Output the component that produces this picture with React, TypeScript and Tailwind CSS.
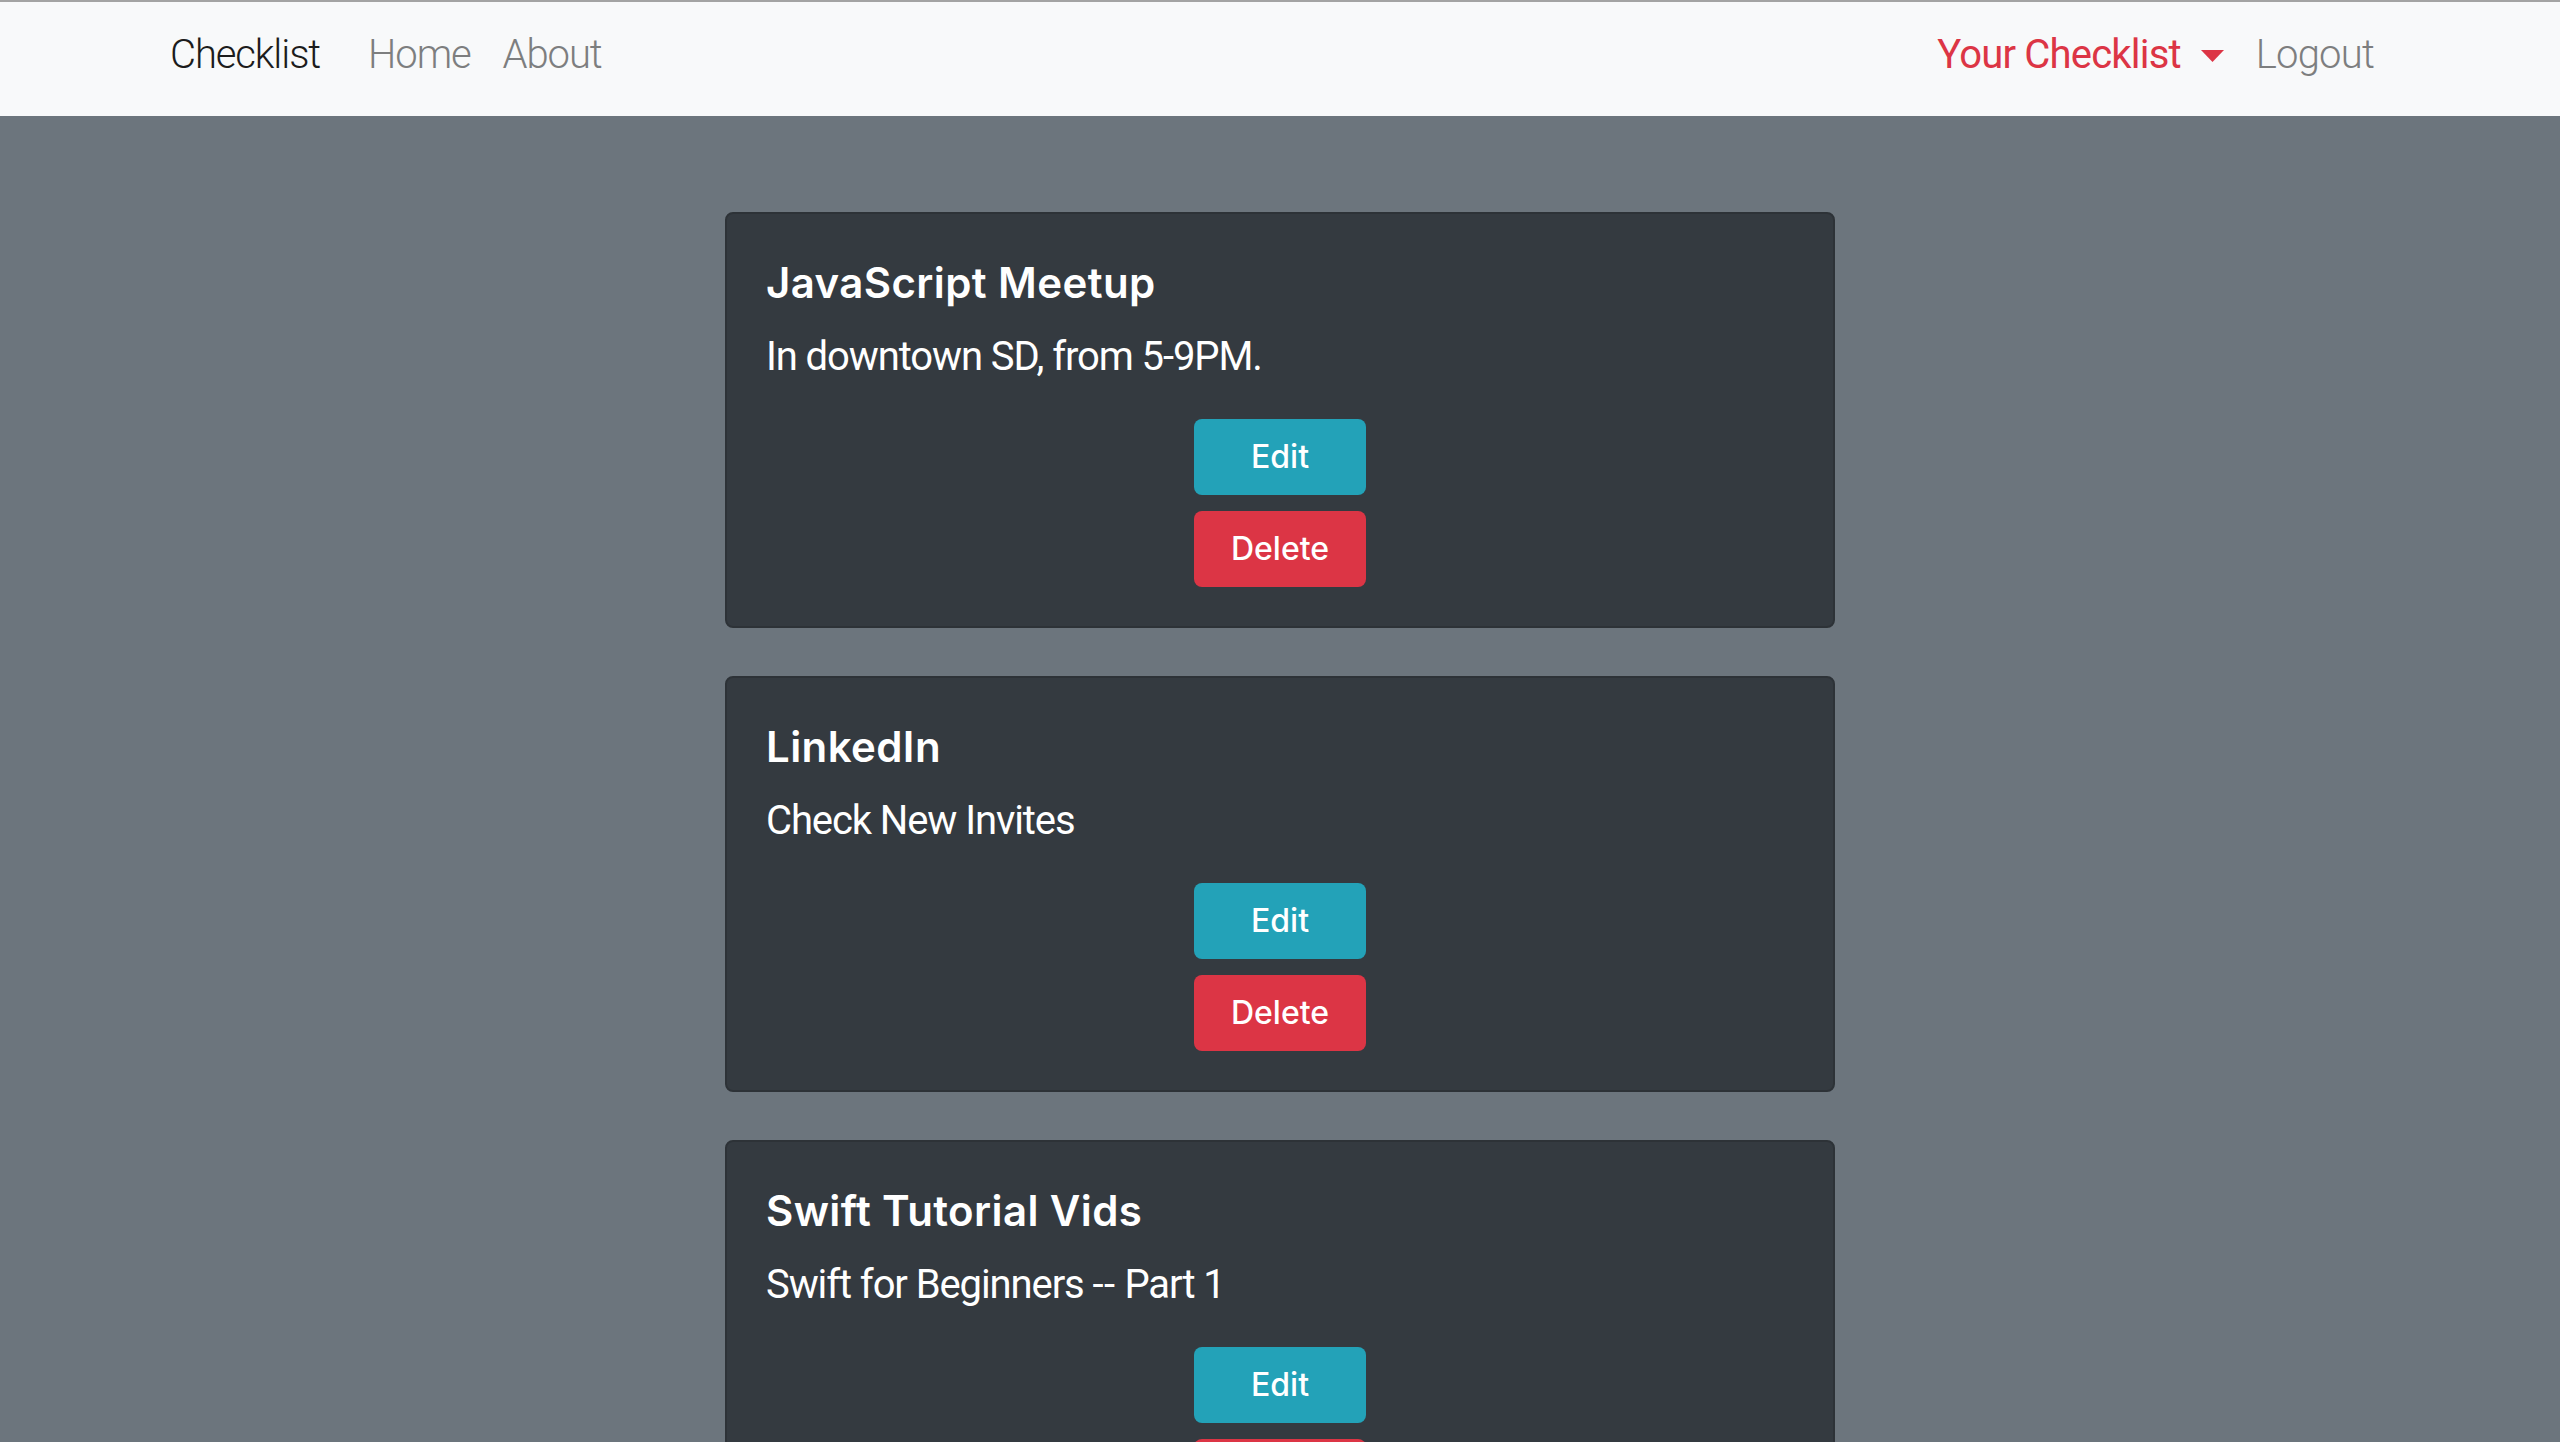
const items = [
  { title: 'JavaScript Meetup', text: 'In downtown SD, from 5-9PM.' },
  { title: 'LinkedIn', text: 'Check New Invites' },
  { title: 'Swift Tutorial Vids', text: 'Swift for Beginners -- Part 1' },
]

// keep the double hyphen readable under the tight tracking
function CardText({ text }: { text: string }) {
  const parts = text.split('--')
  if (parts.length === 1) return <>{text}</>
  return (
    <>
      {parts[0]}
      <span className="tracking-[0.5px]">--</span>
      {parts[1]}
    </>
  )
}

function ItemCard({ title, text }: { title: string; text: string }) {
  return (
    <div className="rounded-lg border-2 border-[#2d3237] bg-[#343a40] px-[39px] pt-[45px] pb-[39px] text-white">
      <h5 className="text-[42px] leading-[48px] font-semibold tracking-[0.4px]">{title}</h5>
      <p className="mt-5 font-['Roboto',sans-serif] text-[40px] leading-[60px] font-normal tracking-[-1.1px]">
        <CardText text={text} />
      </p>
      <div className="mt-8 flex flex-col items-center gap-4">
        <button className="h-[76px] w-[172px] rounded-lg bg-[#23a2b8] text-[32px] font-medium text-white">
          Edit
        </button>
        <button className="h-[76px] w-[172px] rounded-lg bg-[#dc3545] text-[32px] font-medium text-white">
          Delete
        </button>
      </div>
    </div>
  )
}

export default function App() {
  return (
    <div className="min-h-screen bg-[#6c757d] font-['Inter',sans-serif]">
      {/* Navbar */}
      <nav className="h-[116px] border-t-2 border-[#a3a3a3] bg-[#f8f9fa]">
        <div className="mx-auto flex h-full max-w-[2280px] items-center justify-between px-[30px] pb-[9px] font-['Roboto',sans-serif]">
          <div className="flex items-center text-[40px] leading-[60px] font-light tracking-[-1.1px]">
            <span className="mr-[32px] text-[#1c1c1c]">Checklist</span>
            <span className="px-4 text-[#7d7e7f]">Home</span>
            <span className="px-4 text-[#7d7e7f]">About</span>
          </div>
          <div className="flex items-center text-[40px] leading-[60px] font-light tracking-[-0.8px]">
            <span className="flex items-center px-4 font-normal text-[#dc3545]">
              Your Checklist
              <svg className="ml-[20px] mt-[2px]" width="23" height="12" viewBox="0 0 23 12">
                <path d="M0 0 L23 0 L11.5 12 Z" fill="#dc3545" />
              </svg>
            </span>
            <span className="px-4 text-[#7d7e7f]">Logout</span>
          </div>
        </div>
      </nav>

      <main className="mx-auto flex w-[1110px] flex-col gap-[48px] pt-[96px] pb-[96px]">
        {items.map((item) => (
          <ItemCard key={item.title} title={item.title} text={item.text} />
        ))}
      </main>
    </div>
  )
}
